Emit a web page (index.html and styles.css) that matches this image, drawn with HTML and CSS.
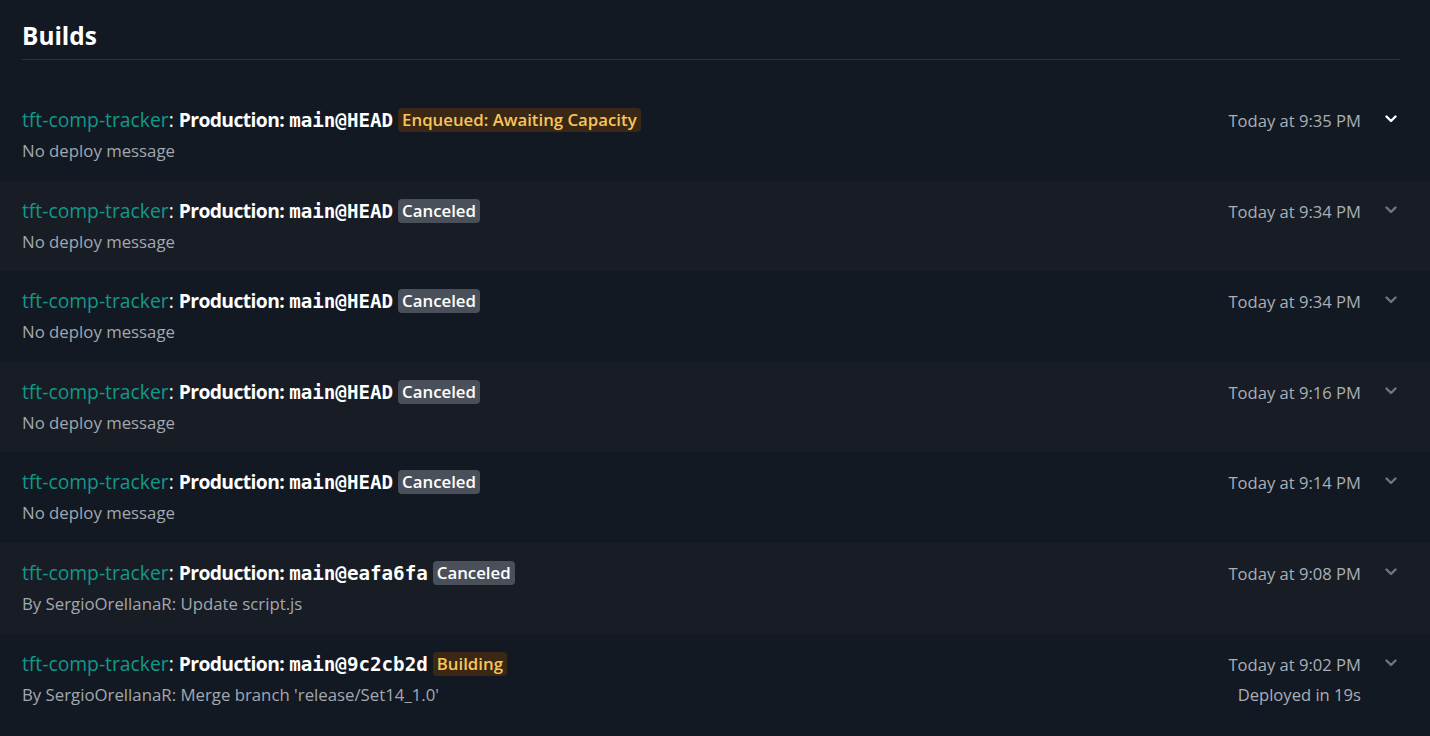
FILE: index.html
```html
<!DOCTYPE html>
<html>
<head>
<meta charset="utf-8">
<link rel="stylesheet" href="styles.css">
</head>
<body>
<div class="page">
  <header class="header"><h1>Builds</h1></header>
  <ul class="builds">
    <li class="build">
      <div class="info">
        <div class="title"><span class="svc">tft-comp-tracker</span>: <b>Production:</b> <code>main@HEAD</code> <span class="badge warn">Enqueued: Awaiting Capacity</span></div>
        <div class="msg">No deploy message</div>
      </div>
      <div class="meta"><div class="time">Today at 9:35 PM</div></div>
      <svg class="chev active" viewBox="0 0 12 8" width="12" height="8"><path d="M1.5 1.5 L6 6 L10.5 1.5" fill="none" stroke="currentColor" stroke-width="2.4" stroke-linecap="round" stroke-linejoin="round"/></svg>
    </li>
    <li class="build">
      <div class="info">
        <div class="title"><span class="svc">tft-comp-tracker</span>: <b>Production:</b> <code>main@HEAD</code> <span class="badge gray">Canceled</span></div>
        <div class="msg">No deploy message</div>
      </div>
      <div class="meta"><div class="time">Today at 9:34 PM</div></div>
      <svg class="chev" viewBox="0 0 12 8" width="12" height="8"><path d="M1.5 1.5 L6 6 L10.5 1.5" fill="none" stroke="currentColor" stroke-width="2.4" stroke-linecap="round" stroke-linejoin="round"/></svg>
    </li>
    <li class="build">
      <div class="info">
        <div class="title"><span class="svc">tft-comp-tracker</span>: <b>Production:</b> <code>main@HEAD</code> <span class="badge gray">Canceled</span></div>
        <div class="msg">No deploy message</div>
      </div>
      <div class="meta"><div class="time">Today at 9:34 PM</div></div>
      <svg class="chev" viewBox="0 0 12 8" width="12" height="8"><path d="M1.5 1.5 L6 6 L10.5 1.5" fill="none" stroke="currentColor" stroke-width="2.4" stroke-linecap="round" stroke-linejoin="round"/></svg>
    </li>
    <li class="build">
      <div class="info">
        <div class="title"><span class="svc">tft-comp-tracker</span>: <b>Production:</b> <code>main@HEAD</code> <span class="badge gray">Canceled</span></div>
        <div class="msg">No deploy message</div>
      </div>
      <div class="meta"><div class="time">Today at 9:16 PM</div></div>
      <svg class="chev" viewBox="0 0 12 8" width="12" height="8"><path d="M1.5 1.5 L6 6 L10.5 1.5" fill="none" stroke="currentColor" stroke-width="2.4" stroke-linecap="round" stroke-linejoin="round"/></svg>
    </li>
    <li class="build">
      <div class="info">
        <div class="title"><span class="svc">tft-comp-tracker</span>: <b>Production:</b> <code>main@HEAD</code> <span class="badge gray">Canceled</span></div>
        <div class="msg">No deploy message</div>
      </div>
      <div class="meta"><div class="time">Today at 9:14 PM</div></div>
      <svg class="chev" viewBox="0 0 12 8" width="12" height="8"><path d="M1.5 1.5 L6 6 L10.5 1.5" fill="none" stroke="currentColor" stroke-width="2.4" stroke-linecap="round" stroke-linejoin="round"/></svg>
    </li>
    <li class="build">
      <div class="info">
        <div class="title"><span class="svc">tft-comp-tracker</span>: <b>Production:</b> <code>main@eafa6fa</code> <span class="badge gray">Canceled</span></div>
        <div class="msg">By SergioOrellanaR: Update script.js</div>
      </div>
      <div class="meta"><div class="time">Today at 9:08 PM</div></div>
      <svg class="chev" viewBox="0 0 12 8" width="12" height="8"><path d="M1.5 1.5 L6 6 L10.5 1.5" fill="none" stroke="currentColor" stroke-width="2.4" stroke-linecap="round" stroke-linejoin="round"/></svg>
    </li>
    <li class="build">
      <div class="info">
        <div class="title"><span class="svc">tft-comp-tracker</span>: <b>Production:</b> <code>main@9c2cb2d</code> <span class="badge warn">Building</span></div>
        <div class="msg">By SergioOrellanaR: Merge branch 'release/Set14_1.0'</div>
      </div>
      <div class="meta"><div class="time">Today at 9:02 PM</div><div class="dur">Deployed in 19s</div></div>
      <svg class="chev" viewBox="0 0 12 8" width="12" height="8"><path d="M1.5 1.5 L6 6 L10.5 1.5" fill="none" stroke="currentColor" stroke-width="2.4" stroke-linecap="round" stroke-linejoin="round"/></svg>
    </li>
  </ul>
</div>
</body>
</html>
```
FILE: styles.css
```css
* { box-sizing: border-box; }
html, body { margin: 0; padding: 0; }
body {
  background: #131922;
  color: #ffffff;
  font-family: "Open Sans", "Noto Sans", sans-serif;
  height: 736px;
  overflow: hidden;
}
.header {
  margin: 0 30px 0 22px;
  height: 60px;
  border-bottom: 1px solid #2e343c;
  padding-top: 22px;
}
.header h1 {
  margin: 0;
  font-size: 24.4px;
  font-weight: 700;
  line-height: 28px;
}
.builds {
  list-style: none;
  margin: 30px 0 0 0;
  padding: 0;
}
.build {
  display: flex;
  align-items: flex-start;
  height: 90.6px;
  padding: 17px 33px 0 22px;
}
.build:nth-child(even) { background: #181d25; }
.info { flex: 1; min-width: 0; }
.title {
  font-size: 19.3px;
  line-height: 26px;
  white-space: nowrap;
}
.svc { color: #12988a; }
.title b { font-weight: 700; letter-spacing: -0.6px; }
code {
  font-family: "DejaVu Sans Mono", "Liberation Mono", monospace;
  font-weight: 700;
  font-size: 19.2px;
}
.badge {
  display: inline-block;
  font-size: 16.8px;
  font-weight: 600;
  line-height: 24px;
  padding: 0 4px;
  border-radius: 4px;
  vertical-align: 1px;
}
.badge.warn { background: #3a2814; color: #f7c55b; }
.badge.gray { background: #4a5059; color: #ffffff; }
.msg {
  margin-top: 5px;
  font-size: 16.8px;
  line-height: 23px;
  color: #a2a8b0;
}
.meta {
  text-align: right;
  font-size: 16.6px;
  line-height: 22px;
  color: #a9afb7;
  padding-top: 3px;
}
.dur { margin-top: 8px; }
.chev {
  margin-left: 24px;
  margin-top: 8px;
  color: #6f757d;
}
.chev.active { color: #ffffff; }
```
